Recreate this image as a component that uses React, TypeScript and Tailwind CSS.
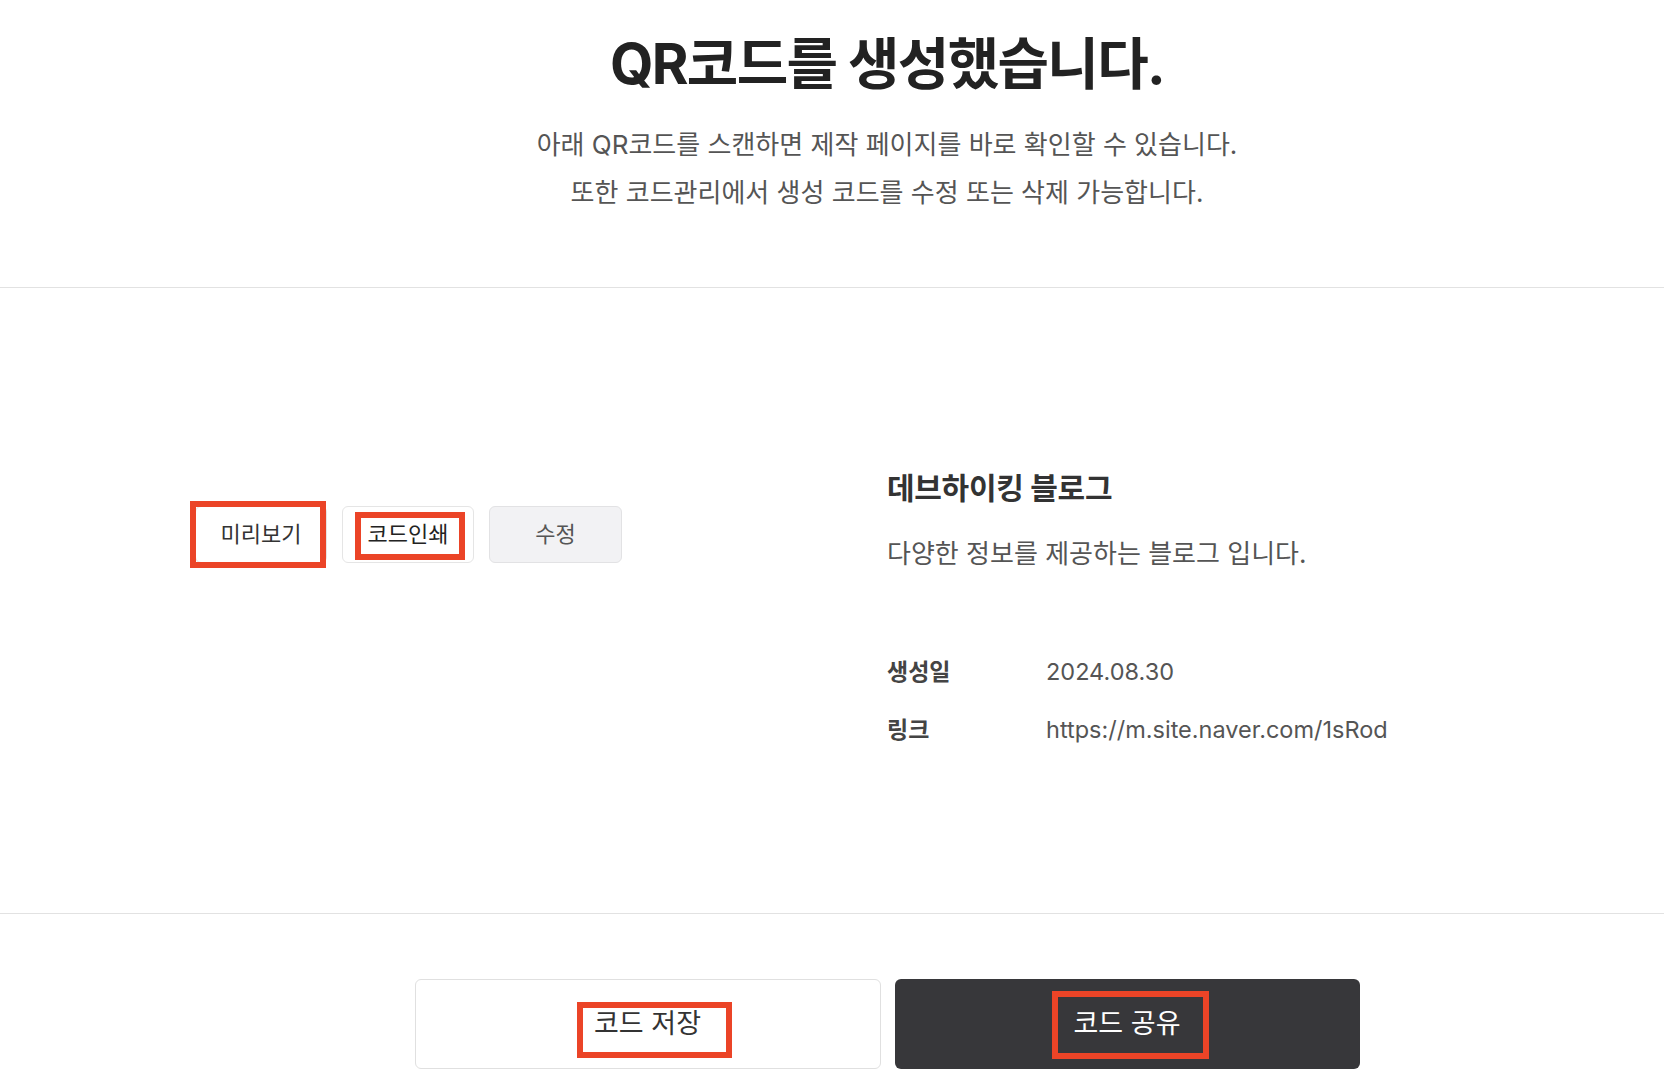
import React from 'react';

const RedBox: React.FC<{ className: string }> = ({ className }) => (
  <div className={`pointer-events-none absolute border-[6px] border-[#eb4427] ${className}`} />
);

const App: React.FC = () => {
  return (
    <div
      className="relative min-h-[1078px] w-full bg-white text-[#333]"
      style={{ fontFamily: 'Inter, "Noto Sans CJK KR", sans-serif' }}
    >
      {/* header */}
      <div className="border-b border-[#e2e2e2] pl-[110px] pt-[31px] pb-[70px] text-center">
        <h1 className="text-[56px] font-bold leading-[67px] tracking-[-0.03em] text-[#222]">
          QR코드를 생성했습니다.
        </h1>
        <p className="mt-[23px] text-[26px] leading-[48px] text-[#555]">
          아래 QR코드를 스캔하면 제작 페이지를 바로 확인할 수 있습니다.
          <br />
          또한 코드관리에서 생성 코드를 수정 또는 삭제 가능합니다.
        </p>
      </div>

      {/* code info */}
      <div className="flex h-[626px] border-b border-[#e2e2e2] pl-[195px]">
        <div className="w-[692px] pt-[218px]">
          <div className="flex gap-[15px]">
            <button className="h-[57px] w-[132px] rounded-md border border-[#e5e5e5] bg-white text-[22px] text-[#333]">
              미리보기
            </button>
            <button className="h-[57px] w-[132px] rounded-md border border-[#e5e5e5] bg-white text-[22px] text-[#222]">
              코드인쇄
            </button>
            <button className="h-[57px] w-[133px] rounded-md border border-[#e2e2e4] bg-[#f2f2f4] text-[22px] text-[#555]">
              수정
            </button>
          </div>
        </div>
        <div className="pt-[180px]">
          <h2 className="text-[30px] font-bold leading-[40px] tracking-[-0.01em] text-[#333]">
            데브하이킹 블로그
          </h2>
          <p className="mt-[28px] text-[26px] leading-[36px] text-[#555]">
            다양한 정보를 제공하는 블로그 입니다.
          </p>
          <dl className="mt-[84px] flex flex-col gap-[26px] leading-[32px]">
            <div className="flex">
              <dt className="w-[159px] text-[23px] font-bold text-[#444]">생성일</dt>
              <dd className="text-[23.5px] text-[#555]">2024.08.30</dd>
            </div>
            <div className="flex">
              <dt className="w-[159px] text-[23px] font-bold text-[#444]">링크</dt>
              <dd className="text-[23.5px] text-[#555]">https://m.site.naver.com/1sRod</dd>
            </div>
          </dl>
        </div>
      </div>

      {/* actions */}
      <div className="flex justify-center gap-[14px] pl-[110px] pt-[65px]">
        <button className="h-[90px] w-[466px] rounded-md border border-[#e0e0e0] bg-white text-[27px] text-[#333]">
          코드 저장
        </button>
        <button className="h-[90px] w-[465px] rounded-md bg-[#37373a] text-[27px] text-white">
          코드 공유
        </button>
      </div>

      {/* annotation boxes */}
      <RedBox className="left-[190px] top-[501px] h-[67px] w-[136px]" />
      <RedBox className="left-[355px] top-[512px] h-[48px] w-[110px]" />
      <RedBox className="left-[577px] top-[1002px] h-[56px] w-[155px]" />
      <RedBox className="left-[1052px] top-[991px] h-[68px] w-[157px]" />
    </div>
  );
};

export default App;
